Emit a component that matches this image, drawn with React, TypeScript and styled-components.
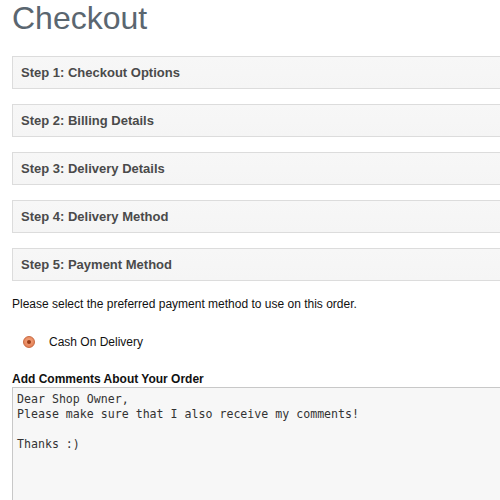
import React from "react";
import styled, { createGlobalStyle } from "styled-components";

const GlobalStyle = createGlobalStyle`
  html, body {
    margin: 0;
    padding: 0;
    background: #fff;
    overflow: hidden;
  }
  body {
    font-family: "Liberation Sans", Arial, sans-serif;
  }
`;

// the real page is wider than the shot; panels run off the right edge
const Page = styled.div`
  box-sizing: border-box;
  width: 500px;
  height: 500px;
  overflow: hidden;
  padding-left: 12px;
`;

const Title = styled.h1`
  margin: 0;
  font-size: 32px;
  line-height: 36px;
  font-weight: normal;
  color: #5a6670;
  height: 56px;
`;

const PanelList = styled.div`
  display: flex;
  flex-direction: column;
  gap: 15px;
`;

const Panel = styled.div`
  height: 31px;
  border: 1px solid #dcdcdc;
  border-right: none;
  background: linear-gradient(#f7f7f7, #f5f5f5);
  display: flex;
  align-items: center;
  padding-left: 8px;
  font-size: 13px;
  font-weight: bold;
  color: #4a4a4a;
`;

const Intro = styled.p`
  margin: 0;
  padding-top: 15px;
  font-size: 12px;
  line-height: 16px;
  color: #111;
`;

const RadioRow = styled.label`
  display: flex;
  align-items: center;
  gap: 14px;
  margin-top: 22px;
  padding-left: 11px;
  font-size: 12px;
  line-height: 16px;
  color: #111;
`;

const RadioDot = styled.span`
  width: 12px;
  height: 12px;
  border-radius: 50%;
  background: radial-gradient(circle at 50% 40%, #f2a57f, #e0764a);
  border: 1px solid #c8683f;
  box-sizing: border-box;
  display: flex;
  align-items: center;
  justify-content: center;
  &::after {
    content: "";
    width: 4px;
    height: 4px;
    border-radius: 50%;
    background: #9a3c17;
  }
`;

const CommentLabel = styled.div`
  margin-top: 22px;
  font-size: 12px;
  font-weight: bold;
  line-height: 14px;
  color: #111;
`;

const CommentBox = styled.div`
  margin-top: 1px;
  height: 140px;
  border: 1px solid #c8c8c8;
  border-right: none;
  border-bottom: none;
  background: #f7f7f7;
  padding: 4px 4px;
  font-family: "DejaVu Sans Mono", "Liberation Mono", monospace;
  font-size: 11.6px;
  line-height: 15px;
  color: #333;
  white-space: pre;
`;

const steps = [
  "Step 1: Checkout Options",
  "Step 2: Billing Details",
  "Step 3: Delivery Details",
  "Step 4: Delivery Method",
  "Step 5: Payment Method",
];

const comment = `Dear Shop Owner,
Please make sure that I also receive my comments!

Thanks :)`;

export default function App() {
  return (
    <>
      <GlobalStyle />
      <Page>
        <Title>Checkout</Title>
        <PanelList>
          {steps.map((s) => (
            <Panel key={s}>{s}</Panel>
          ))}
        </PanelList>
        <Intro>Please select the preferred payment method to use on this order.</Intro>
        <RadioRow>
          <RadioDot />
          Cash On Delivery
        </RadioRow>
        <CommentLabel>Add Comments About Your Order</CommentLabel>
        <CommentBox>{comment}</CommentBox>
      </Page>
    </>
  );
}
